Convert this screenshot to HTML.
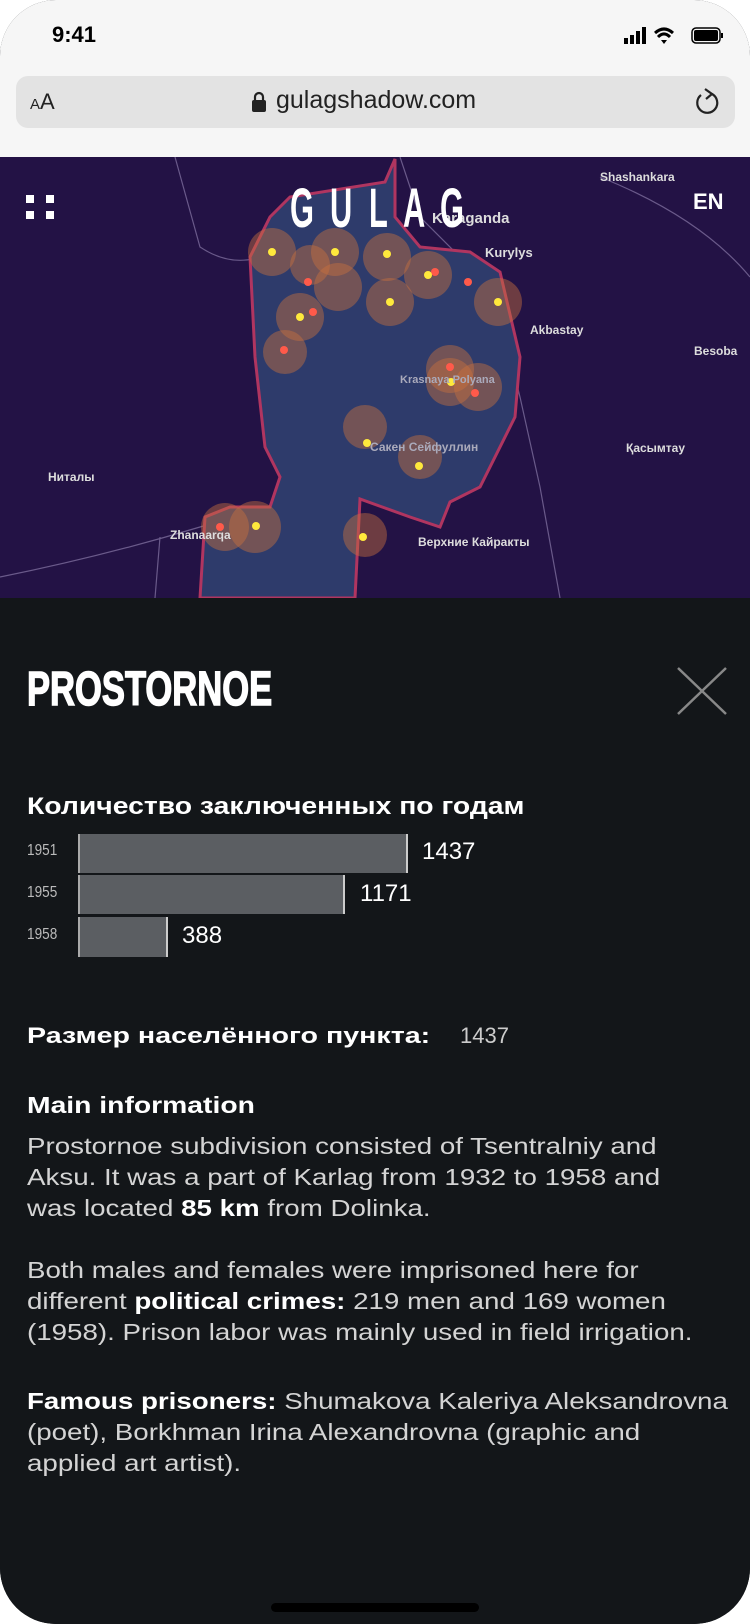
<!DOCTYPE html>
<html><head><meta charset="utf-8"><style>
*{margin:0;padding:0;box-sizing:border-box}
body{width:750px;height:1624px;background:#fff;overflow:hidden;font-family:"Liberation Sans",sans-serif;position:relative}
.phone{position:absolute;left:0;top:0;width:750px;height:1624px;border-radius:56px;overflow:hidden;background:#131619}
.chrome{position:absolute;left:0;top:0;width:750px;height:157px;background:#f6f6f6}
.time{position:absolute;left:52px;top:22px;font-size:22px;font-weight:bold;color:#000}
.url{position:absolute;left:16px;top:76px;width:719px;height:52px;border-radius:12px;background:#e3e3e3}
.map{position:absolute;left:0;top:157px;width:750px;height:441px;background:#231245;overflow:hidden}
.panel{position:absolute;left:0;top:598px;width:750px;height:1026px;background:#131619;color:#d9d9d9}
.abs{position:absolute}
.sx{transform:scaleX(1.18);transform-origin:left top;white-space:nowrap}
.lbl{font-size:16px;color:#bbb;position:absolute;left:27px;transform:scaleX(.85);transform-origin:left}
.bar{position:absolute;left:78px;background:#5b5e62;border-right:2px solid #ccc;border-left:2px solid #aaa}
.num{position:absolute;font-size:24px;color:#fff}
.p{position:absolute;left:27px;font-size:23px;line-height:31px;color:#d4d4d4;white-space:nowrap;transform:scaleX(1.205);transform-origin:left top}
.p b{color:#fff}
</style></head><body>
<div class="phone">
<div class="chrome">
<div class="time">9:41</div>
<svg class="abs" style="left:624px;top:26px" width="100" height="20" viewBox="0 0 100 20">
<rect x="0" y="12" width="4" height="6" fill="#000"/><rect x="6" y="9" width="4" height="9" fill="#000"/><rect x="12" y="5" width="4" height="13" fill="#000"/><rect x="18" y="1" width="4" height="17" fill="#000"/>
<path d="M31 7 Q40 -1 49 7" stroke="#000" stroke-width="3" fill="none"/><path d="M34 11 Q40 5 46 11" stroke="#000" stroke-width="3" fill="none"/><path d="M37 14 L40 18 L43 14 Z" fill="#000"/>
<rect x="68" y="2" width="28" height="15" rx="4" fill="none" stroke="#000" stroke-width="1.5"/><rect x="70" y="4" width="24" height="11" rx="2" fill="#000"/><rect x="97" y="7" width="2" height="5" fill="#000"/>
</svg>
<div class="url">
<div class="abs" style="left:14px;top:13px;font-size:22px;color:#222"><span style="font-size:15px">A</span>A</div>
<svg class="abs" style="left:235px;top:15px" width="16" height="22"><path d="M4 10 V6 a4 4 0 0 1 8 0 V10" stroke="#222" stroke-width="2.2" fill="none"/><rect x="1" y="9" width="14" height="12" rx="2" fill="#222"/></svg>
<div class="abs" style="left:260px;top:10px;font-size:25px;color:#222">gulagshadow.com</div>
<svg class="abs" style="left:676px;top:10px" width="30" height="32" viewBox="0 0 30 32"><path d="M20 8 A10 10 0 1 1 9 9" stroke="#222" stroke-width="2.2" fill="none"/><path d="M13 3 L20 8 L14 13" stroke="#222" stroke-width="2.2" fill="none"/></svg>
</div>
</div>
<div class="map">
<svg width="750" height="441" viewBox="0 0 750 441">
<g stroke="#6a5a8a" stroke-width="1.2" fill="none">
<path d="M175 0 L200 90 Q230 110 260 100"/><path d="M400 0 L420 60 L460 100 L500 160 L520 240 L540 330 L560 441"/><path d="M0 420 Q100 400 200 370 L300 340 L420 260"/><path d="M600 20 Q700 60 750 120"/><path d="M160 380 L155 441"/>
</g>
<path d="M395 2 L395 60 L420 90 L470 95 L500 115 L520 200 L515 260 L480 330 L450 345 L440 370 L410 360 L360 342 L355 441 L200 441 L205 360 L230 350 L270 350 L280 320 L265 290 L255 200 L250 100 L270 60 L290 40 L385 25 Z" fill="#2e3b6b" stroke="#b03560" stroke-width="3"/>
<g fill="#c8703e" fill-opacity=".45">
<circle cx="272" cy="95" r="24"/><circle cx="335" cy="95" r="24"/><circle cx="387" cy="100" r="24"/><circle cx="428" cy="118" r="24"/><circle cx="300" cy="160" r="24"/><circle cx="390" cy="145" r="24"/><circle cx="338" cy="130" r="24"/><circle cx="498" cy="145" r="24"/><circle cx="450" cy="212" r="24"/><circle cx="450" cy="225" r="24"/><circle cx="478" cy="230" r="24"/><circle cx="285" cy="195" r="22"/><circle cx="365" cy="270" r="22"/><circle cx="420" cy="300" r="22"/><circle cx="255" cy="370" r="26"/><circle cx="225" cy="370" r="24"/><circle cx="365" cy="378" r="22"/><circle cx="310" cy="108" r="20"/>
</g>
<g fill="#ff5a4a"><circle cx="308" cy="125" r="4"/><circle cx="313" cy="155" r="4"/><circle cx="284" cy="193" r="4"/><circle cx="450" cy="210" r="4"/><circle cx="475" cy="236" r="4"/><circle cx="468" cy="125" r="4"/><circle cx="435" cy="115" r="4"/><circle cx="220" cy="370" r="4"/></g>
<g fill="#ffe93c"><circle cx="272" cy="95" r="4"/><circle cx="335" cy="95" r="4"/><circle cx="387" cy="97" r="4"/><circle cx="428" cy="118" r="4"/><circle cx="300" cy="160" r="4"/><circle cx="390" cy="145" r="4"/><circle cx="498" cy="145" r="4"/><circle cx="451" cy="225" r="4"/><circle cx="367" cy="286" r="4"/><circle cx="419" cy="309" r="4"/><circle cx="256" cy="369" r="4"/><circle cx="363" cy="380" r="4"/></g>
<g fill="#ddd" font-family="Liberation Sans" font-size="13" font-weight="bold">
<text x="600" y="24" font-size="12">Shashankara</text><text x="432" y="66" font-size="15">Karaganda</text><text x="485" y="100" font-size="13">Kurylys</text><text x="530" y="177" font-size="12">Akbastay</text><text x="694" y="198" font-size="12">Besoba</text><text x="626" y="295" font-size="12">Қасымтау</text><text x="48" y="324" font-size="12">Ниталы</text><text x="170" y="382" font-size="12">Zhanaarqa</text><text x="418" y="389" font-size="12">Верхние Кайракты</text>
<text x="370" y="294" font-size="12" fill="#aab">Сакен Сейфуллин</text><text x="400" y="226" font-size="11" fill="#aab">Krasnaya Polyana</text>
</g>
<g fill="#fff"><rect x="26" y="38" width="8" height="8"/><rect x="46" y="38" width="8" height="8"/><rect x="26" y="54" width="8" height="8"/><rect x="46" y="54" width="8" height="8"/></g>
<g fill="#fff" font-family="Liberation Sans" font-size="56" font-weight="bold">
<text transform="translate(290,70) scale(0.55,1)">G</text>
<text transform="translate(330,70) scale(0.55,1)">U</text>
<text transform="translate(369,70) scale(0.55,1)">L</text>
<text transform="translate(403,70) scale(0.55,1)">A</text>
<text transform="translate(440,70) scale(0.55,1)">G</text>
</g>
<text x="693" y="52" fill="#fff" font-family="Liberation Sans" font-size="22" font-weight="bold">EN</text>
</svg>
</div>
<div class="panel">
<div class="abs" style="left:27px;top:68px;font-size:48px;font-weight:bold;color:#fff;transform:scaleX(.72);transform-origin:left;line-height:48px;-webkit-text-stroke:1.5px #fff">PROSTORNOE</div>
<svg class="abs" style="left:676px;top:68px" width="52" height="50"><path d="M2 2 L50 48 M50 2 L2 48" stroke="#888" stroke-width="2.5"/></svg>
<div class="abs sx" style="left:27px;top:195px;font-size:24px;font-weight:bold;color:#fff">Количество заключенных по годам</div>
<div class="lbl" style="top:244px">1951</div><div class="lbl" style="top:286px">1955</div><div class="lbl" style="top:328px">1958</div>
<div class="bar" style="top:236px;width:330px;height:39px"></div>
<div class="bar" style="top:277px;width:267px;height:39px"></div>
<div class="bar" style="top:319px;width:90px;height:40px"></div>
<div class="num" style="left:422px;top:240px">1437</div>
<div class="num" style="left:360px;top:282px">1171</div>
<div class="num" style="left:182px;top:324px">388</div>
<div class="abs sx" style="left:27px;top:425px;font-size:22px;font-weight:bold;color:#fff;transform:scaleX(1.3)">Размер населённого пункта:</div>
<div class="abs" style="left:460px;top:425px;font-size:22px;color:#ccc">1437</div>
<div class="abs sx" style="left:27px;top:494px;font-size:23px;font-weight:bold;color:#fff;transform:scaleX(1.23)">Main information</div>
<div class="p" style="top:533px">Prostornoe subdivision consisted of Tsentralniy and<br>Aksu. It was a part of Karlag from 1932 to 1958 and<br>was located <b>85 km</b> from Dolinka.</div>
<div class="p" style="top:657px">Both males and females were imprisoned here for<br>different <b>political crimes:</b> 219 men and 169 women<br>(1958). Prison labor was mainly used in field irrigation.</div>
<div class="p" style="top:788px"><b>Famous prisoners:</b> Shumakova Kaleriya Aleksandrovna<br>(poet), Borkhman Irina Alexandrovna (graphic and<br>applied art artist).</div>
<div class="abs" style="left:271px;top:1005px;width:208px;height:9px;border-radius:5px;background:#000"></div>
</div>
</div>
</body></html>
